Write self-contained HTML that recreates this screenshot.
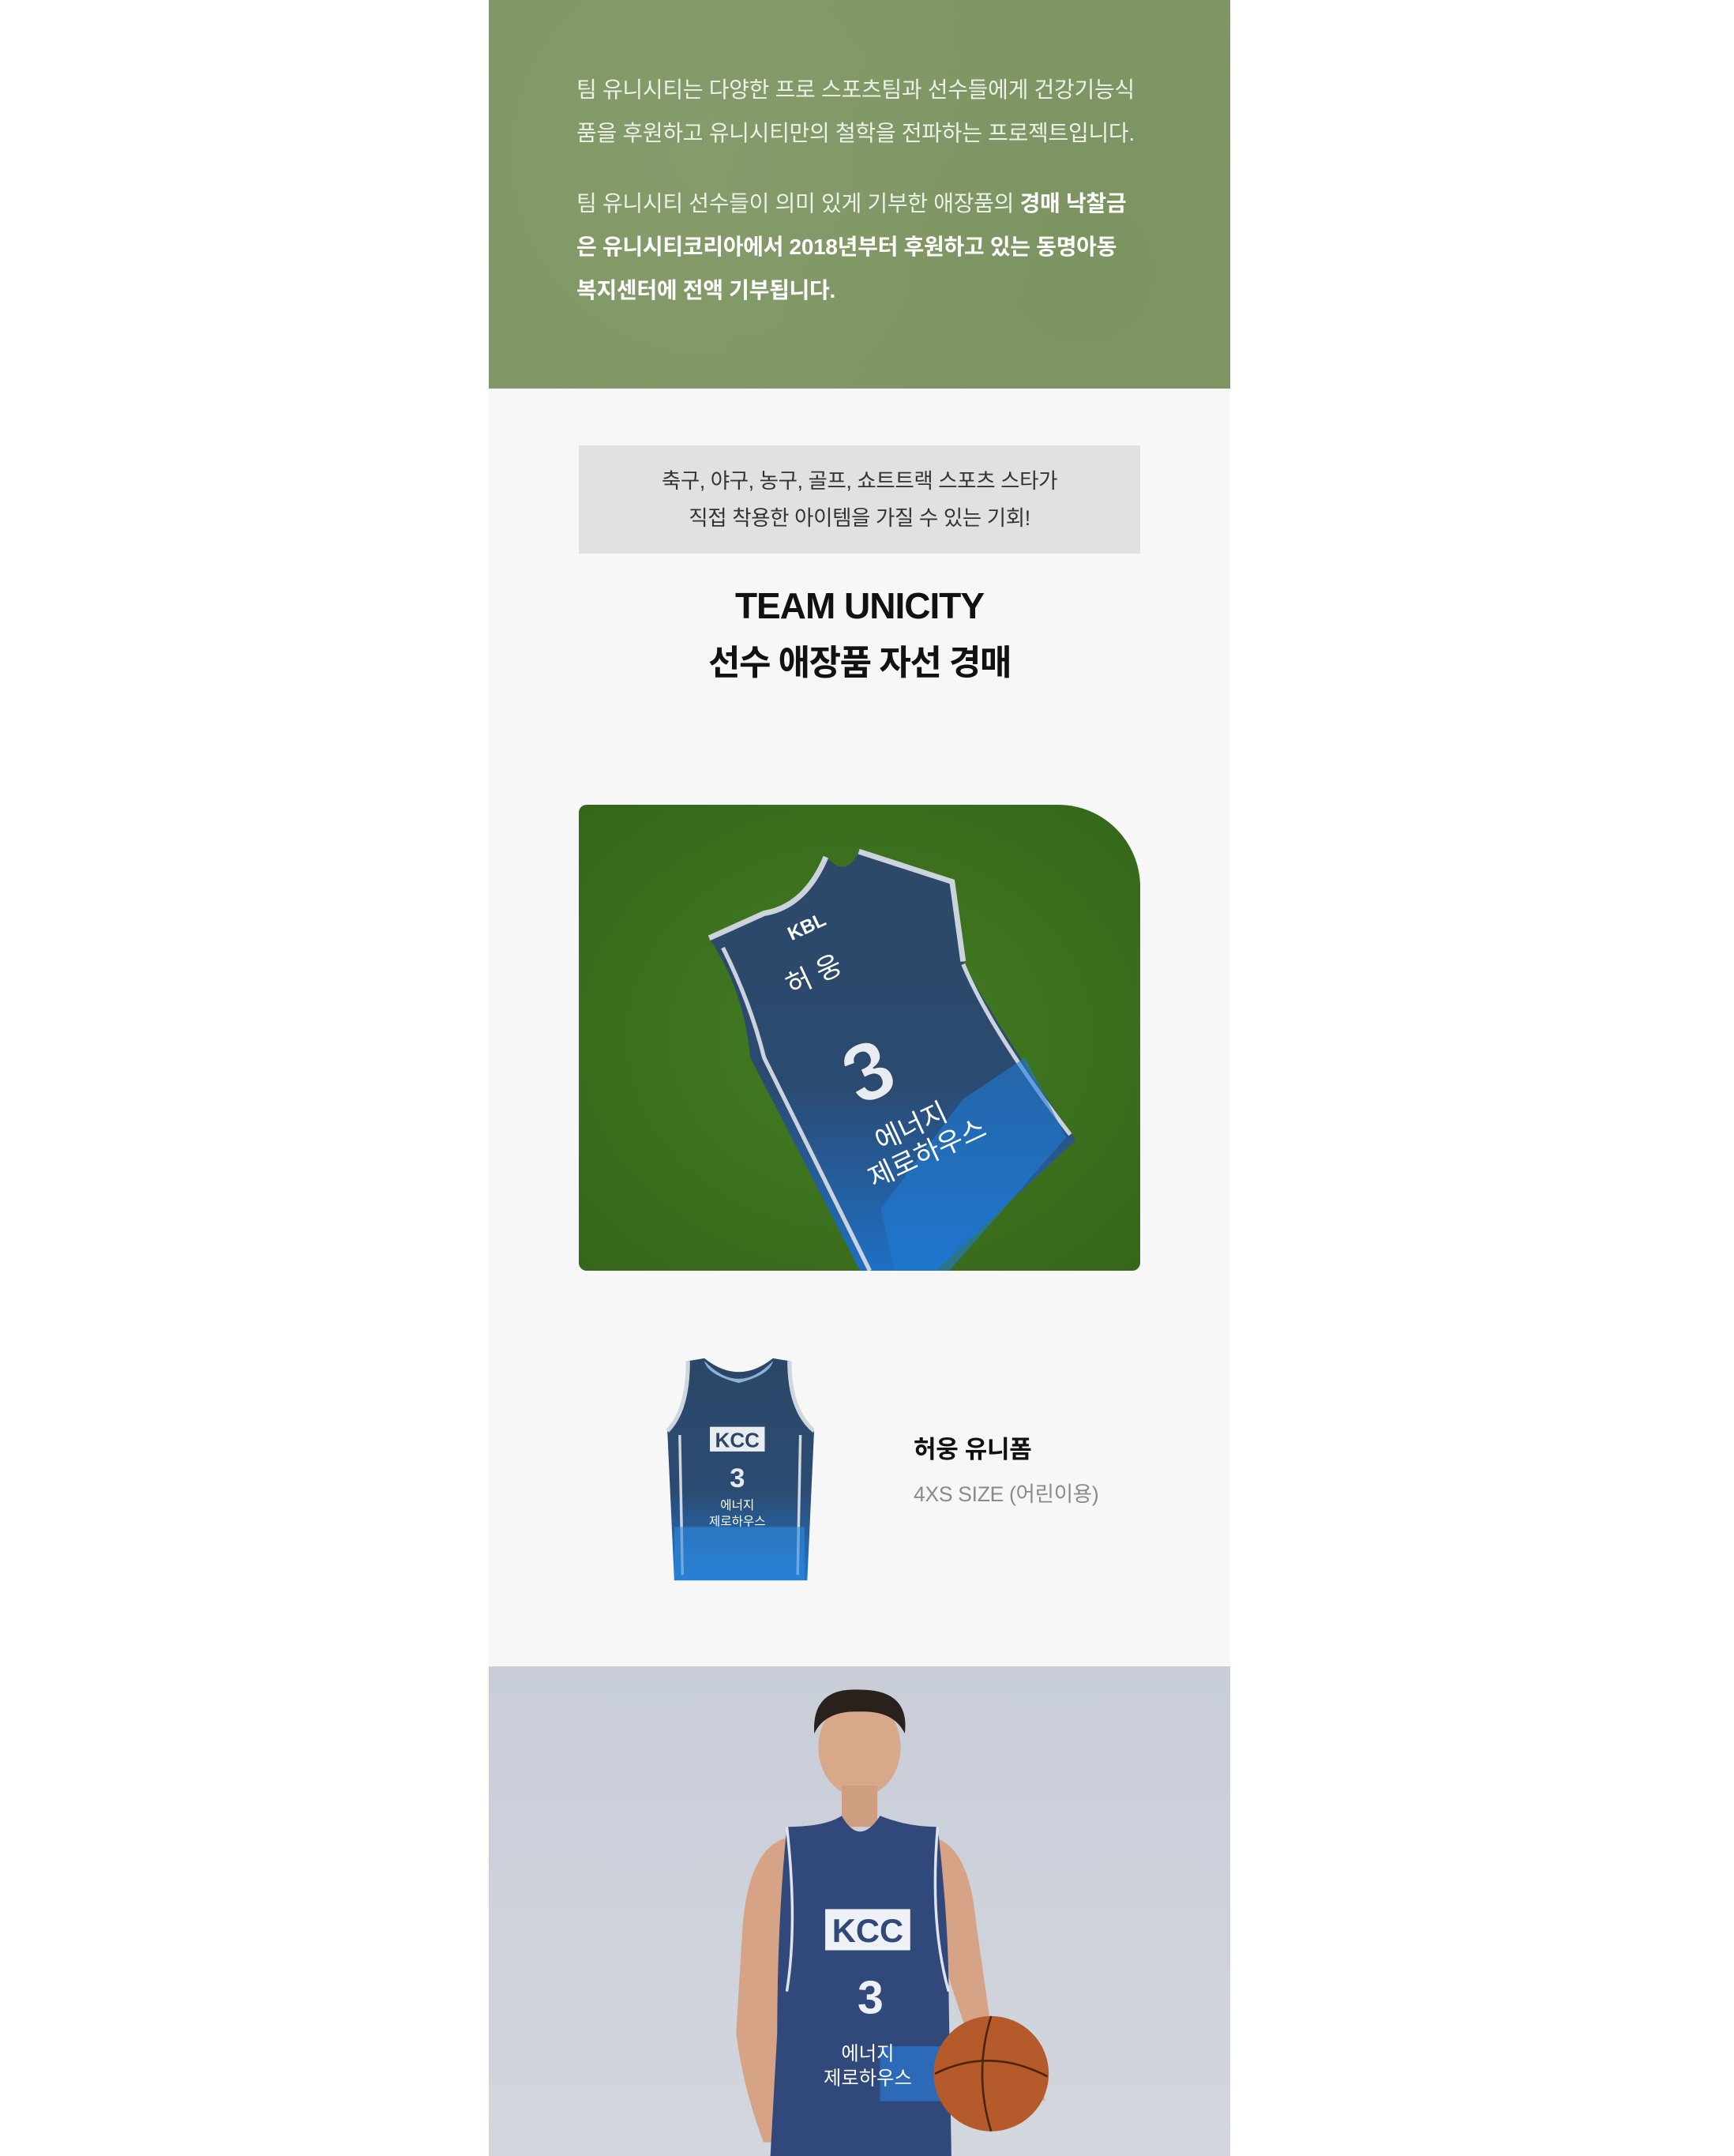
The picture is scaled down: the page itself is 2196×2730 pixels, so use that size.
<!DOCTYPE html>
<html><head><meta charset="utf-8">
<style>
*{margin:0;padding:0;box-sizing:border-box}
html,body{width:2196px;height:2730px;background:#fff;overflow:hidden}
body{font-family:"Liberation Sans","Noto Sans CJK KR",sans-serif;position:relative}
.col{position:absolute;left:619px;top:0;width:939px;height:2730px;background:#f7f7f7}
.green{position:absolute;left:0;top:0;width:939px;height:492px;background:#809865;
background-image:radial-gradient(circle at 30% 40%,rgba(138,158,112,.5),transparent 60%),radial-gradient(circle at 80% 70%,rgba(120,142,95,.5),transparent 60%);}
.p{position:absolute;left:111px;color:#eef1ea;font-size:28px;line-height:55px;letter-spacing:-0.3px;white-space:nowrap}
.p b{font-weight:bold;color:#fff}
.gbox{position:absolute;left:114px;top:564px;width:711px;height:137px;background:#e1e1e1;text-align:center;color:#333;font-size:26.5px;line-height:47px;padding-top:22px;letter-spacing:-0.4px}
.t1{position:absolute;left:0;width:939px;text-align:center;font-weight:bold;color:#111}
.photo{position:absolute;left:114px;top:1019px;width:711px;height:590px;border-radius:10px 104px 10px 10px;overflow:hidden}
.pname{position:absolute;left:538px;top:1810px;font-size:31px;font-weight:bold;color:#111;letter-spacing:-0.3px}
.psize{position:absolute;left:538px;top:1870px;font-size:26.5px;color:#8a8a8a;letter-spacing:-0.3px}
.player{position:absolute;left:0;top:2110px;width:939px;height:620px;background:linear-gradient(#c8cdd8,#d3d6dd)}
</style></head><body>
<div class="col">
 <div class="green">
  <div class="p" style="top:86px">팀 유니시티는 다양한 프로 스포츠팀과 선수들에게 건강기능식<br>품을 후원하고 유니시티만의 철학을 전파하는 프로젝트입니다.</div>
  <div class="p" style="top:230px">팀 유니시티 선수들이 의미 있게 기부한 애장품의 <b>경매 낙찰금</b><br><b>은 유니시티코리아에서 2018년부터 후원하고 있는 동명아동</b><br><b>복지센터에 전액 기부됩니다.</b></div>
 </div>
 <div class="gbox">축구, 야구, 농구, 골프, 쇼트트랙 스포츠 스타가<br>직접 착용한 아이템을 가질 수 있는 기회!</div>
 <div class="t1" style="top:740px;font-size:46px;letter-spacing:-1px">TEAM UNICITY</div>
 <div class="t1" style="top:803px;font-size:44px;letter-spacing:-1.5px">선수 애장품 자선 경매</div>

 <div class="photo">
  <svg width="711" height="590" viewBox="420 586 409 339" preserveAspectRatio="none">
   <defs>
    <radialGradient id="gr" cx="50%" cy="50%" r="70%"><stop offset="0" stop-color="#447d22"/><stop offset="1" stop-color="#35661a"/></radialGradient>
    <linearGradient id="jb" x1="0" y1="0" x2="0" y2="1"><stop offset="0" stop-color="#2d4868"/><stop offset=".55" stop-color="#2b4a70"/><stop offset="1" stop-color="#1e6fc4"/></linearGradient>
   </defs>
   <rect x="420" y="586" width="409" height="339" fill="url(#gr)"/>
   <path d="M600 624 Q585 660 555 665 L515 683 Q540 720 545 770 L625 925 L680 925 L782 830 Q720 740 700 700 L692 642 L624 620 Q615 640 600 624Z" fill="url(#jb)"/>
   <path d="M600 624 Q585 660 555 665 L515 683" fill="none" stroke="#ccd3dc" stroke-width="4"/>
   <path d="M624 620 L692 642 L700 700" fill="none" stroke="#ccd3dc" stroke-width="4"/>
   <path d="M525 690 Q545 730 555 770 L632 925" fill="none" stroke="#ccd3dc" stroke-width="3"/>
   <path d="M700 702 Q720 750 778 826" fill="none" stroke="#ccd3dc" stroke-width="3"/>
   <polygon points="700,800 745,770 775,828 690,925 650,925 640,880" fill="#1f7bd6" opacity=".6"/>
   <text x="575" y="685" font-size="14" font-weight="bold" fill="#fff" transform="rotate(-25 575 685)" font-family="Liberation Sans,sans-serif">KBL</text>
   <text x="575" y="725" font-size="20" fill="#fff" transform="rotate(-25 575 725)" font-family="Liberation Sans,Noto Sans CJK KR,sans-serif">허 웅</text>
   <text x="610" y="800" font-size="60" font-weight="bold" fill="#e8ecf0" stroke="#2d4868" stroke-width="1" transform="rotate(-25 630 770)" font-family="Liberation Sans,sans-serif">3</text>
   <text x="640" y="838" font-size="20" fill="#fff" transform="rotate(-25 640 838)" font-family="Liberation Sans,Noto Sans CJK KR,sans-serif">에너지</text>
   <text x="635" y="865" font-size="20" fill="#fff" transform="rotate(-25 635 865)" font-family="Liberation Sans,Noto Sans CJK KR,sans-serif">제로하우스</text>
  </svg>
 </div>

 <svg style="position:absolute;left:221px;top:1716px" width="191" height="289" viewBox="0 0 110 166">
  <defs><linearGradient id="sj" x1="0" y1="0" x2="0" y2="1"><stop offset="0" stop-color="#2b4668"/><stop offset=".6" stop-color="#2c4b72"/><stop offset="1" stop-color="#1f75cf"/></linearGradient></defs>
  <path d="M18 4 L30 2 Q55 22 80 2 L92 4 Q92 40 110 55 L105 164 L8 164 L3 55 Q18 40 18 4Z" fill="url(#sj)"/>
  <path d="M30 4 Q55 30 80 4 Q78 14 55 20 Q32 14 30 4Z" fill="#8fb2d4"/>
  <path d="M18 4 Q18 40 3 55 M92 4 Q92 40 110 55" fill="none" stroke="#cfd6de" stroke-width="3"/>
  <path d="M12 58 L14 160 M100 58 L98 160" stroke="#cfd6de" stroke-width="2"/>
  <rect x="34" y="52" width="40" height="18" fill="#e9edf2"/>
  <text x="54" y="67" font-size="15" font-weight="bold" text-anchor="middle" fill="#2b4668" font-family="Liberation Sans,sans-serif">KCC</text>
  <text x="54" y="96" font-size="20" font-weight="bold" text-anchor="middle" fill="#e8ecf0" font-family="Liberation Sans,sans-serif">3</text>
  <rect x="8" y="125" width="95" height="39" fill="#2f88dc" opacity=".6"/>
  <text x="54" y="112" font-size="9" text-anchor="middle" fill="#fff" font-family="Noto Sans CJK KR,sans-serif">에너지</text>
  <text x="54" y="124" font-size="9" text-anchor="middle" fill="#fff" font-family="Noto Sans CJK KR,sans-serif">제로하우스</text>
 </svg>
 <div class="pname">허웅 유니폼</div>
 <div class="psize">4XS SIZE (어린이용)</div>

 <div class="player">
  <svg width="939" height="620" viewBox="355 1213 540 357">
   <ellipse cx="625" cy="1272" rx="30" ry="36" fill="#d9a88a"/>
   <path d="M592 1262 Q590 1228 625 1230 Q662 1230 658 1262 Q650 1245 625 1246 Q600 1245 592 1262Z" fill="#2a211c"/>
   <rect x="612" y="1300" width="26" height="30" fill="#cf9d80"/>
   <path d="M572 1338 Q545 1345 540 1400 L535 1480 Q540 1520 555 1560 L575 1560 L572 1450 Z" fill="#d6a386"/>
   <path d="M680 1338 Q705 1345 710 1400 L720 1470 L755 1500 L760 1530 L710 1500 L690 1440Z" fill="#d6a386"/>
   <path d="M572 1330 Q600 1330 612 1322 Q625 1345 640 1322 Q660 1330 682 1330 Q690 1400 690 1450 L692 1570 L560 1570 L565 1480 Q565 1400 572 1330Z" fill="#30497a"/>
   <path d="M572 1330 Q580 1400 572 1450 M682 1330 Q676 1400 690 1450" fill="none" stroke="#dfe4ec" stroke-width="2"/>
   <rect x="600" y="1390" width="62" height="30" fill="#eef1f5"/>
   <text x="631" y="1414" font-size="24" font-weight="bold" text-anchor="middle" fill="#30497a" font-family="Liberation Sans,sans-serif">KCC</text>
   <text x="633" y="1466" font-size="34" font-weight="bold" text-anchor="middle" fill="#eef1f5" font-family="Liberation Sans,sans-serif">3</text>
   <rect x="640" y="1490" width="50" height="40" fill="#2b78d0" opacity=".7"/>
   <text x="631" y="1500" font-size="14" text-anchor="middle" fill="#fff" font-family="Noto Sans CJK KR,sans-serif">에너지</text>
   <text x="631" y="1518" font-size="14" text-anchor="middle" fill="#fff" font-family="Noto Sans CJK KR,sans-serif">제로하우스</text>
   <circle cx="721" cy="1510" r="42" fill="#b55a2a"/>
   <path d="M680 1510 Q720 1490 762 1512 M721 1468 Q708 1510 721 1552" fill="none" stroke="#4a2510" stroke-width="1.5"/>
  </svg>
 </div>
</div>
</body></html>
